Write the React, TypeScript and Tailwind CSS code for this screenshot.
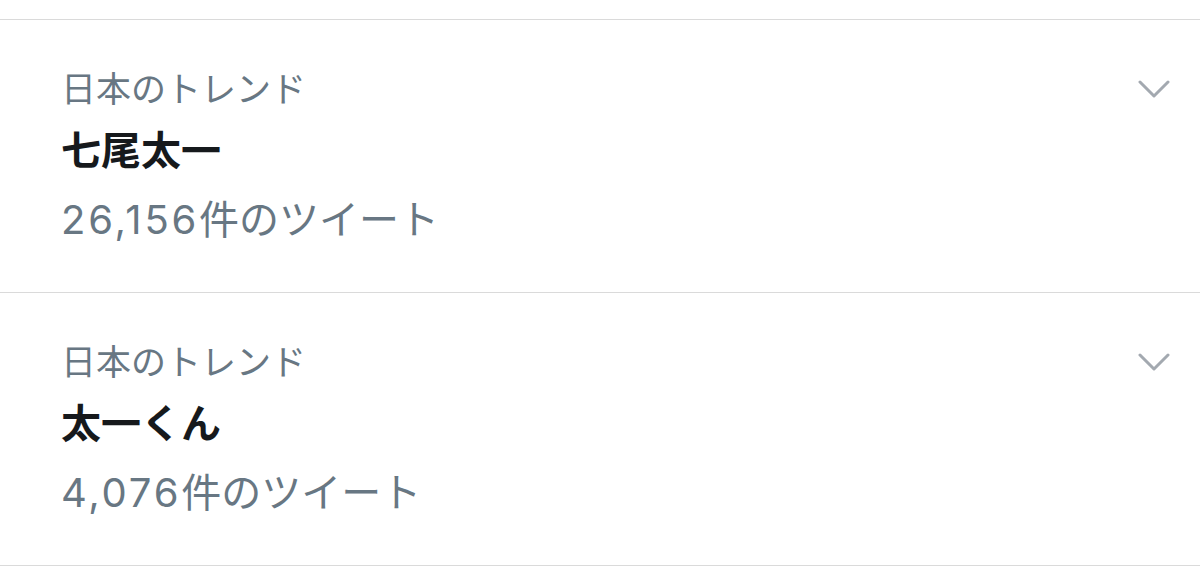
import React from "react";

const FONT = { fontFamily: 'Inter, "Noto Sans CJK JP", sans-serif' };

function Chevron() {
  return (
    <svg width="32" height="20" viewBox="0 0 32 20" className="shrink-0">
      <path d="M2 2 L16 16 L30 2" fill="none" stroke="#a3a9b0" strokeWidth="3" strokeLinecap="round" strokeLinejoin="round" />
    </svg>
  );
}

function Trend({ title, count }: { title: string; count: string }) {
  return (
    <div className="flex border-b border-[#dadada] pl-[61px] pr-[30px] pt-[49px] pb-[50px]">
      <div className="flex-1 flex flex-col">
        <div className="text-[35px] leading-[40px] text-[#687783]">日本のトレンド</div>
        <div className="mt-[20px] text-[40px] leading-[44px] font-bold text-[#16191c]">{title}</div>
        <div className="mt-[25px] text-[40px] leading-[44px] text-[#687783]">
          <span className="tracking-[2.8px]">{count}</span>件のツイート
        </div>
      </div>
      <div className="pt-[11px]">
        <Chevron />
      </div>
    </div>
  );
}

export default function App() {
  return (
    <div className="w-[1200px] h-[570px] bg-white overflow-hidden" style={FONT}>
      <div className="h-[20px] border-b border-[#dadada]" />
      <Trend title="七尾太一" count="26,156" />
      <Trend title="太一くん" count="4,076" />
    </div>
  );
}
